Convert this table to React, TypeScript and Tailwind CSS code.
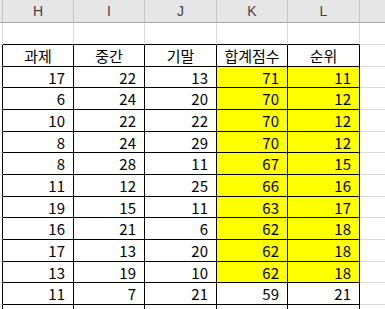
const cols = ["H", "I", "J", "K", "L"]
// widths include the 1px right border
const widths = ["w-[71px]", "w-[71px]", "w-[72px]", "w-[71px]", "w-[72px]"]
const rowHeights = [
  "h-[22px]", "h-[21px]", "h-[22px]", "h-[22px]", "h-[21px]", "h-[22px]",
  "h-[22px]", "h-[21px]", "h-[22px]", "h-[22px]", "h-[21px]", "h-[22px]",
]

const heads = ["과제", "중간", "기말", "합계점수", "순위"]
const rows: [number, number, number, number, number, boolean][] = [
  [17, 22, 13, 71, 11, true],
  [6, 24, 20, 70, 12, true],
  [10, 22, 22, 70, 12, true],
  [8, 24, 29, 70, 12, true],
  [8, 28, 11, 67, 15, true],
  [11, 12, 25, 66, 16, true],
  [19, 15, 11, 63, 17, true],
  [16, 21, 6, 62, 18, true],
  [17, 13, 20, 62, 18, true],
  [13, 19, 10, 62, 18, true],
  [11, 7, 21, 59, 21, false],
]

const font = { fontFamily: '"Noto Sans CJK KR", "Noto Sans", sans-serif' }

export default function App() {
  return (
    <div className="w-[385px] h-[309px] overflow-hidden bg-white text-black" style={font}>
      {/* column letters */}
      <div className="flex h-[23px] bg-[#e6e6e6] border-b border-[#a6a6a6]">
        <div className="w-[3px] border-r border-[#c4c4c4]" />
        {cols.map((c, i) => (
          <div
            key={c}
            className={`${widths[i]} border-r border-[#c4c4c4] flex items-center justify-center text-[14px] text-[#444] pt-[1px]`}
            style={{ fontFamily: '"Liberation Sans", Arial, sans-serif' }}
          >
            {c}
          </div>
        ))}
        <div className="flex-1" />
      </div>

      {/* empty row */}
      <div className="flex h-[22px]">
        <div className="w-[3px] border-r border-b border-[#dadada]" />
        {cols.map((c, i) => (
          <div key={c} className={`${widths[i]} border-r border-[#dadada] border-b-black border-b`} />
        ))}
        <div className="flex-1 border-b border-[#dadada]" />
      </div>

      {/* table header */}
      <div className={`flex ${rowHeights[0]}`}>
        <div className="w-[3px] border-r border-black border-b border-b-[#dadada]" />
        {heads.map((h, i) => (
          <div
            key={h}
            className={`${widths[i]} border-r border-b border-black flex items-center justify-center text-[15px] leading-none`}
          >
            {h}
          </div>
        ))}
        <div className="flex-1 border-b border-[#dadada]" />
      </div>

      {rows.map((r, ri) => (
        <div key={ri} className={`flex ${rowHeights[ri + 1]}`}>
          <div className="w-[3px] border-r border-black border-b border-b-[#dadada]" />
          {r.slice(0, 5).map((v, i) => (
            <div
              key={i}
              className={`${widths[i]} border-r border-b border-black flex items-center justify-end pr-[8px] text-[15px] leading-none ${
                i >= 3 && r[5] ? "bg-[#ffff00]" : ""
              }`}
            >
              {v as number}
            </div>
          ))}
          <div className="flex-1 border-b border-[#dadada]" />
        </div>
      ))}

      <div className="flex h-[22px]">
        <div className="w-[3px] border-r border-black" />
        {cols.map((c, i) => (
          <div key={c} className={`${widths[i]} border-r border-black`} />
        ))}
        <div className="flex-1" />
      </div>
    </div>
  )
}
